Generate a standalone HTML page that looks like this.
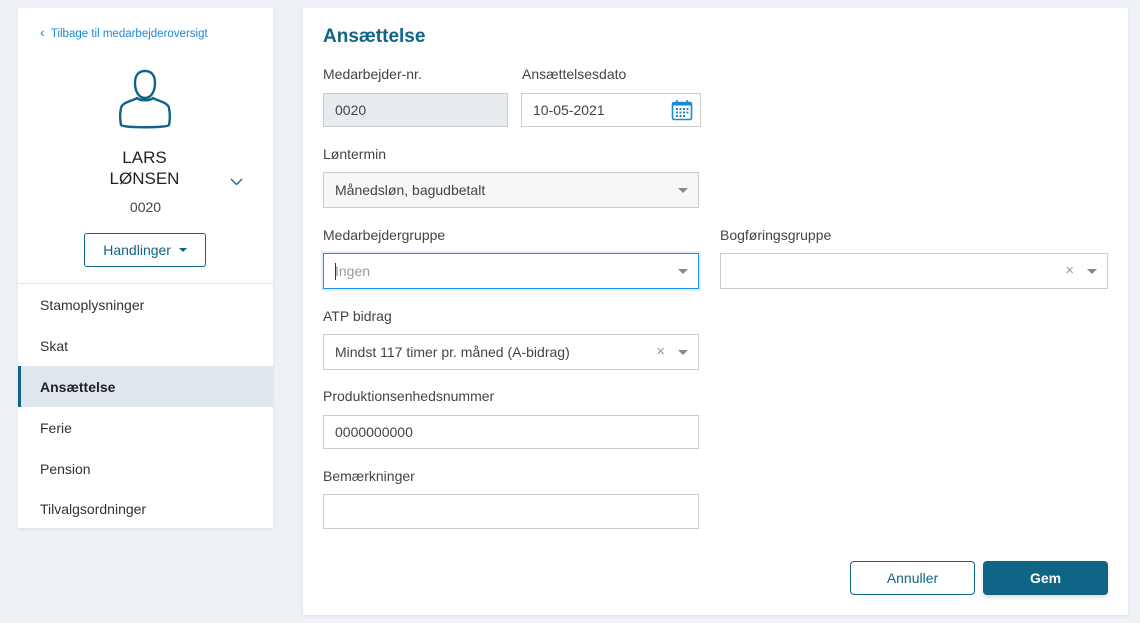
<!DOCTYPE html>
<html><head><meta charset="utf-8"><style>
*{box-sizing:border-box;margin:0;padding:0}
body{width:1140px;height:623px;background:#eef1f5;font-family:"Liberation Sans",sans-serif;color:#333;position:relative;overflow:hidden;font-size:14px}
.card{position:absolute;background:#fff;box-shadow:0 1px 3px rgba(0,0,0,.08)}
.a{position:absolute}
.lbl{position:absolute;font-size:14px;color:#444}
.inp{position:absolute;border:1px solid #ccc;background:#fff;font-size:14px;color:#444;padding-left:11px;display:flex;align-items:center}
.caret{position:absolute;width:0;height:0;border-left:5px solid transparent;border-right:5px solid transparent;border-top:5px solid #888;top:50%;margin-top:-2px}
.x{position:absolute;color:#999;font-size:15px;top:50%;transform:translateY(-52%)}
.nav{position:absolute;left:18px;width:255px;height:41px;padding-left:22px;display:flex;align-items:center;font-size:14px;color:#333}
</style></head><body>
<div class="card" style="left:18px;top:8px;width:255px;height:520px"></div>
<div class="a" style="left:40px;top:24px;font-size:11.5px;color:#1a8ad4"><span style="font-size:14px">&#8249;</span>&nbsp; Tilbage til medarbejderoversigt</div>
<svg class="a" style="left:118px;top:68px" width="54" height="64" viewBox="0 0 54 64"><path d="M27 3c-7 0-10 5-10 12 0 7 3 15 10 15s10-8 10-15c0-7-3-12-10-12z" fill="none" stroke="#0e6586" stroke-width="2.4"/><path d="M19 30c-4 3-15 4-16 10-1 5-1 12 0 17 2 3 46 3 48 0 1-5 1-12 0-17-1-6-12-7-16-10-3 3-13 3-16 0z" fill="none" stroke="#0e6586" stroke-width="2.4" stroke-linejoin="round"/></svg>
<div class="a" style="left:18px;top:147px;width:255px;text-align:center;font-size:17px;line-height:21px;color:#222;padding-right:2px">LARS<br>LØNSEN</div>
<svg class="a" style="left:230px;top:178px" width="13" height="8"><path d="M1 1l5.5 5.5L12 1" fill="none" stroke="#0e6586" stroke-width="1.3"/></svg>
<div class="a" style="left:18px;top:199px;width:255px;text-align:center;font-size:14px;color:#444">0020</div>
<div class="a" style="left:84px;top:233px;width:122px;height:34px;border:1px solid #0e6586;border-radius:3px;color:#0e6586;font-size:14px;display:flex;align-items:center;justify-content:center">Handlinger&nbsp;&nbsp;<span style="display:inline-block;border-left:4px solid transparent;border-right:4px solid transparent;border-top:4px solid #0e6586"></span></div>
<div class="a" style="left:18px;top:283px;width:255px;height:1px;background:#e4e7eb"></div>
<div class="nav" style="top:284px">Stamoplysninger</div>
<div class="nav" style="top:325px">Skat</div>
<div class="nav" style="top:366px;background:#dfe6ee;font-weight:bold;color:#222;border-left:3px solid #0e6586;padding-left:19px">Ansættelse</div>
<div class="nav" style="top:407px">Ferie</div>
<div class="nav" style="top:448px">Pension</div>
<div class="nav" style="top:488px">Tilvalgsordninger</div>

<div class="card" style="left:303px;top:8px;width:825px;height:607px"></div>
<div class="a" style="left:323px;top:26px;font-size:19px;font-weight:bold;color:#0e6586">Ansættelse</div>
<div class="lbl" style="left:323px;top:66px">Medarbejder-nr.</div>
<div class="lbl" style="left:522px;top:66px">Ansættelsesdato</div>
<div class="inp" style="left:323px;top:93px;width:185px;height:34px;background:#e9ecef">0020</div>
<div class="inp" style="left:521px;top:93px;width:180px;height:34px">10-05-2021
<svg class="a" style="right:7px;top:5px" width="22" height="22" viewBox="0 0 22 22"><rect x="1.5" y="3.5" width="19" height="17" rx="1.5" fill="none" stroke="#1a8ad4" stroke-width="1.6"/><rect x="1.5" y="3.5" width="19" height="3" fill="#1a8ad4"/><path d="M6 1v4M16 1v4" stroke="#1a8ad4" stroke-width="1.6"/><g fill="#1a8ad4"><rect x="5" y="9" width="2" height="2"/><rect x="8.5" y="9" width="2" height="2"/><rect x="12" y="9" width="2" height="2"/><rect x="15.5" y="9" width="2" height="2"/><rect x="5" y="12.5" width="2" height="2"/><rect x="8.5" y="12.5" width="2" height="2"/><rect x="12" y="12.5" width="2" height="2"/><rect x="15.5" y="12.5" width="2" height="2"/><rect x="5" y="16" width="2" height="2"/><rect x="8.5" y="16" width="2" height="2"/><rect x="12" y="16" width="2" height="2"/></g></svg></div>
<div class="lbl" style="left:323px;top:146px">Løntermin</div>
<div class="inp" style="left:323px;top:172px;width:376px;height:36px;background:#f7f7f7">Månedsløn, bagudbetalt<span class="caret" style="right:10px"></span></div>
<div class="lbl" style="left:323px;top:227px">Medarbejdergruppe</div>
<div class="lbl" style="left:720px;top:227px">Bogføringsgruppe</div>
<div class="inp" style="left:323px;top:253px;width:376px;height:36px;border-color:#1a8cff;box-shadow:0 0 0 2px #e3f0fd;color:#999">Ingen<span class="a" style="left:11px;top:9px;width:1px;height:17px;background:#333"></span><span class="caret" style="right:10px"></span></div>
<div class="inp" style="left:720px;top:253px;width:388px;height:36px"><span class="x" style="right:33px">×</span><span class="caret" style="right:10px"></span></div>
<div class="lbl" style="left:323px;top:308px">ATP bidrag</div>
<div class="inp" style="left:323px;top:334px;width:376px;height:36px">Mindst 117 timer pr. måned (A-bidrag)<span class="x" style="right:33px">×</span><span class="caret" style="right:10px"></span></div>
<div class="lbl" style="left:323px;top:388px">Produktionsenhedsnummer</div>
<div class="inp" style="left:323px;top:415px;width:376px;height:34px">0000000000</div>
<div class="lbl" style="left:323px;top:468px">Bemærkninger</div>
<div class="inp" style="left:323px;top:494px;width:376px;height:35px"></div>
<div class="a" style="left:850px;top:561px;width:125px;height:34px;border:1px solid #0e6586;border-radius:4px;color:#0e6586;display:flex;align-items:center;justify-content:center;font-size:14px">Annuller</div>
<div class="a" style="left:983px;top:561px;width:125px;height:34px;background:#0e6586;border-radius:4px;color:#fff;display:flex;align-items:center;justify-content:center;font-size:14px;font-weight:bold;box-shadow:0 2px 4px rgba(0,0,0,.15)">Gem</div>
</body></html>
